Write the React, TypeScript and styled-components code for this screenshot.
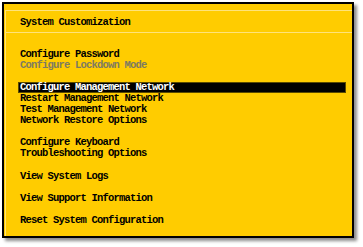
import React from "react";
import styled, { createGlobalStyle } from "styled-components";

const Global = createGlobalStyle`
  html, body { margin: 0; padding: 0; background: #ffffff; }
  body { width: 363px; height: 247px; overflow: hidden; }
`;

const Frame = styled.div`
  box-sizing: border-box;
  margin: 2px 0 0 2px;
  width: 352px;
  height: 236px;
  border: 2px solid #000;
  background: #ffcc00;
  box-shadow: 3px 3px 3px rgba(0, 0, 0, 0.45);
  padding: 6px 0 0 1px;
  display: flex;
  flex-direction: column;
  font-family: "Liberation Mono", "DejaVu Sans Mono", monospace;
  font-weight: bold;
  font-size: 10.5px;
  letter-spacing: -0.8px;
  color: #000;
`;

const Panel = styled.div`
  flex: 1;
  border-top: 1px solid #ffe37a;
  border-left: 1px solid #ffe37a;
  display: flex;
  flex-direction: column;
`;

const Header = styled.div`
  height: 21px;
  line-height: 22px;
  border-bottom: 1px solid #ffe37a;
  padding-left: 14px;
  white-space: pre;
`;

const List = styled.div`
  padding: 16px 6px 0 12px;
  display: flex;
  flex-direction: column;
`;

const Row = styled.div<{ $selected?: boolean; $disabled?: boolean }>`
  box-sizing: border-box;
  height: 11px;
  line-height: 11px;
  padding-left: 2px;
  white-space: pre;
  color: ${(p) => (p.$selected ? "#ffffff" : p.$disabled ? "#7d7a62" : "#000000")};
  background: ${(p) => (p.$selected ? "#000000" : "transparent")};
  box-shadow: ${(p) => (p.$selected ? "inset 0 0 0 1px #5a4a00" : "none")};
`;

const Spacer = styled.div<{ $h?: number }>`
  height: ${(p) => p.$h ?? 11}px;
`;

type Item = { label?: string; selected?: boolean; disabled?: boolean; gap?: number };

const items: Item[] = [
  { label: "Configure Password" },
  { label: "Configure Lockdown Mode", disabled: true },
  {},
  { label: "Configure Management Network", selected: true },
  { label: "Restart Management Network" },
  { label: "Test Management Network" },
  { label: "Network Restore Options" },
  {},
  { label: "Configure Keyboard" },
  { label: "Troubleshooting Options" },
  { gap: 12 },
  { label: "View System Logs" },
  {},
  { label: "View Support Information" },
  {},
  { label: "Reset System Configuration" },
];

export default function App() {
  return (
    <>
      <Global />
      <Frame>
        <Panel>
          <Header>System Customization</Header>
          <List>
            {items.map((it, i) =>
              it.label ? (
                <Row key={i} $selected={it.selected} $disabled={it.disabled}>
                  {it.label}
                </Row>
              ) : (
                <Spacer key={i} $h={it.gap} />
              )
            )}
          </List>
        </Panel>
      </Frame>
    </>
  );
}
